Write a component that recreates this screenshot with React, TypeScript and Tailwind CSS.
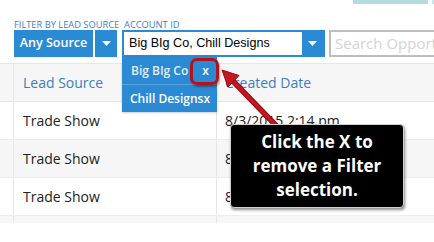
import React from "react";

const rows = ["Trade Show", "Trade Show", "Trade Show"];

function Caret() {
  return (
    <svg width="9" height="5" viewBox="0 0 9 5">
      <path d="M0 0 L9 0 L4.5 5 Z" fill="#ffffff" />
    </svg>
  );
}

export default function App() {
  return (
    <div
      className="relative w-[434px] h-[242px] overflow-hidden bg-white"
      style={{ fontFamily: "'Open Sans', sans-serif" }}
    >
      {/* top bars */}
      <div className="absolute left-[353px] top-0 w-[75px] h-[4px] bg-[#b3dce1]" />
      <div className="absolute left-[432px] top-0 w-[4px] h-[4px] bg-[#c9e6ea]" />

      {/* filter row */}
      <div className="flex pl-[14px] pt-[19px]">
        <div className="flex flex-col w-[103px] shrink-0">
          <span className="text-[9.3px] leading-[11px] text-[#3d7fc3] whitespace-nowrap">
            FILTER BY LEAD SOURCE
          </span>
          <div className="flex h-[27px] gap-[2px]">
            <button className="w-[79px] bg-[#2b8ad4] text-white text-[12.5px] font-semibold whitespace-nowrap">
              Any Source
            </button>
            <button className="w-[22px] bg-[#2b8ad4] flex items-center justify-center">
              <Caret />
            </button>
          </div>
        </div>
        <div className="flex flex-col w-[203px] ml-[5px] shrink-0">
          <span className="text-[9.3px] leading-[11px] text-[#3d7fc3] whitespace-nowrap pl-[2px]">
            ACCOUNT ID
          </span>
          <div className="flex h-[27px] border-2 border-[#2b8ad4]">
            <div
              className="flex-1 bg-white flex items-center pl-[5px] text-[12.6px] text-black whitespace-nowrap overflow-hidden"
              style={{ fontFamily: "'Liberation Sans', Arial, sans-serif" }}
            >
              Big BIg Co, Chill Designs
            </div>
            <div className="w-[21px] bg-[#2b8ad4] flex items-center justify-center">
              <Caret />
            </div>
          </div>
        </div>
        <div className="flex flex-col ml-[4px] shrink-0">
          <span className="h-[11px]" />
          <div className="w-[120px] h-[27px] border-2 border-[#bdbdbd] flex items-center pl-[4px] text-[15px] text-[#d4d4d4] whitespace-nowrap overflow-hidden">
            Search Opportunities
          </div>
        </div>
      </div>

      {/* table */}
      <div className="mt-[6px] border-t border-[#e6e6e6]">
        <div className="flex h-[38px] bg-[#f6f6f6] border-b border-[#e6e6e6]">
          <div className="w-[14px] border-r border-[#e6e6e6]" />
          <div className="w-[203px] border-r border-[#e6e6e6] flex items-center pl-[9px] text-[14px] text-[#3a7fc2]">
            Lead Source
          </div>
          <div className="flex-1 flex items-center pl-[8px] text-[14px] text-[#3a7fc2]">
            Created Date
          </div>
        </div>
        {rows.map((r, i) => (
          <div
            key={i}
            className={`flex h-[38px] border-b border-[#ededed] ${i % 2 === 1 ? "bg-[#f6f6f6]" : "bg-white"}`}
          >
            <div className="w-[14px] border-r border-[#e6e6e6]" />
            <div className="w-[203px] border-r border-[#e6e6e6] flex items-center pl-[9px] text-[14px] text-[#222]">
              {r}
            </div>
            <div className="flex-1 flex items-center pl-[8px] text-[14px] text-[#222]">
              8/3/2015 2:14 pm
            </div>
          </div>
        ))}
        <div className="flex h-[7px] bg-[#f6f6f6]">
          <div className="w-[14px] border-r border-[#e6e6e6]" />
          <div className="w-[203px] border-r border-[#e6e6e6]" />
        </div>
      </div>

      {/* dropdown */}
      <div className="absolute left-[122px] top-[57px] w-[95px] bg-[#2b8ad4] text-white text-[12px] font-semibold whitespace-nowrap shadow-[0_1px_2px_rgba(0,0,0,0.2)]">
        <div className="h-[27px] flex items-center pl-[9px] gap-[14px]">
          <span className="text-[#e4effa]">Big BIg Co</span>
          <span>x</span>
        </div>
        <div className="h-px bg-[#5aa5e0]" />
        <div className="h-[27px] flex items-center pl-[8px]">Chill Designsx</div>
      </div>

      {/* highlight around x */}
      <div className="absolute left-[190px] top-[58px] w-[29px] h-[27px] rounded-[7px] border-[3px] border-[#b3141c] shadow-[1px_2px_2px_rgba(0,0,0,0.35)]" />

      {/* arrow */}
      <svg className="absolute left-0 top-0" width="434" height="242" viewBox="0 0 434 242">
        <line x1="231" y1="79" x2="290" y2="140" stroke="#8e0e14" strokeWidth="5.5" />
        <line x1="231" y1="79" x2="290" y2="140" stroke="#c8161e" strokeWidth="3.5" />
        <polygon points="222,70 239,75.5 228,87" fill="#c8161e" stroke="#8e0e14" strokeWidth="1" />
      </svg>

      {/* tooltip */}
      <div className="absolute left-[230px] top-[124px] w-[174px] h-[84px] rounded-[4px] bg-black border border-[#d0d0d0] shadow-[1px_2px_3px_rgba(0,0,0,0.45)] flex items-center justify-center text-center text-white font-bold text-[17px] leading-[24px]">
        <span>
          Click the X to
          <br />
          remove a Filter
          <br />
          selection.
        </span>
      </div>
    </div>
  );
}
